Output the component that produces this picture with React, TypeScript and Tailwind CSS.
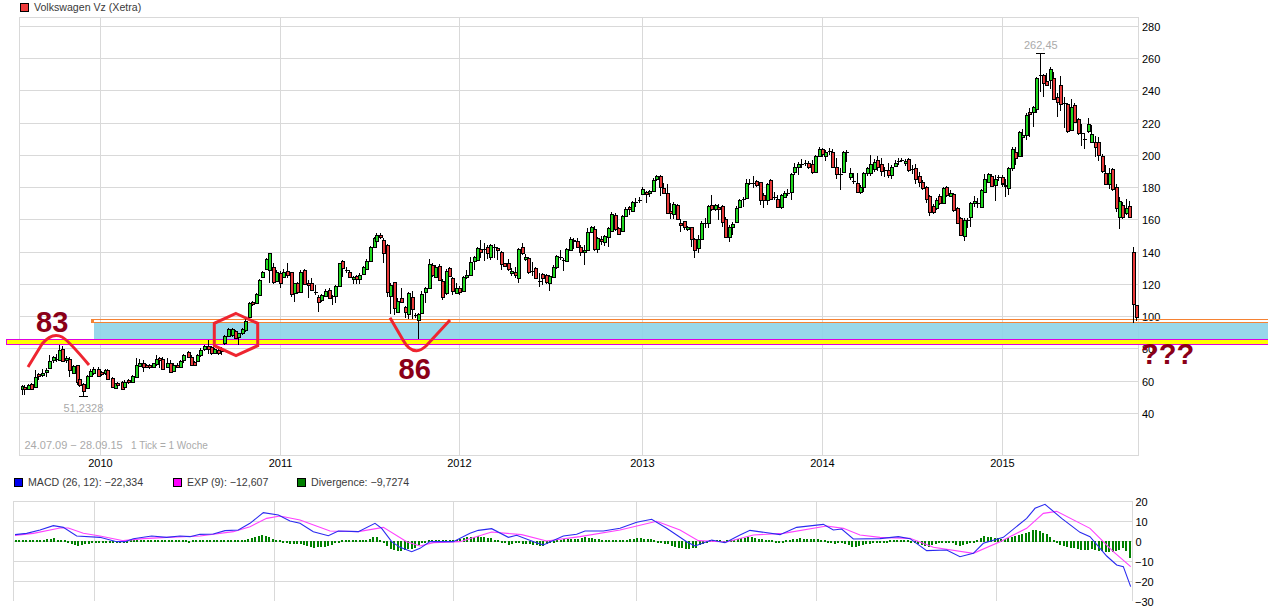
const FONT = "font-['Liberation_Sans',Arial,sans-serif]"

// candle data: xCg/r/d top,bottom[,high,low] in 3x crop coordinates of each stretch
const STRETCHES: { ox: number; oy: number; data: string }[] = [
  {
    ox: 0,
    oy: 280,
    data: `66g318,326,315,345 73r320,326,316,345 85g314,328,313,330 93r312,326,309,330 106g292,322,270,325 115r282,288,280,300 125g278,284,268,290
    137g270,276,265,292 146g244,265,225,265 158g232,240,229,250 168d236,236,222,246 178g210,240,195,242 187r207,242,197,242 197g235,240,228,250 207r237,270,232,290 220g258,278,255,280
    230r256,305,255,315 238r298,316,285,320 250r312,332,310,349 260g288,325,286,328 271g273,287,268,290 280g267,280,262,284 293r268,287,262,290 302r276,283,272,288
    315g270,280,266,284 322r270,297,266,300 335r295,320,292,322 344g310,323,308,328 352r308,315,305,318 365r306,326,303,328 373g305,322,300,326 385r300,307,296,312 395g288,305,284,308
    407g256,290,235,292 418g248,258,238,262 428r248,262,240,275 438r255,260,252,264 448r256,262,252,268 458g250,262,248,265 467g238,252,225,258 478r233,240,230,265 487r238,268,232,270
    500g250,262,235,265 510r248,275,240,278 520g254,272,250,276 530r255,260,250,264 541g243,260,240,262 550g226,240,222,250 563r217,230,214,234 572r230,255,225,258 581r245,255,242,258
    592g226,242,222,245 601g210,226,205,230 613g198,208,195,212 623r198,208,180,222 634r200,220,198,225 643g208,218,204,222 655r210,220,205,226 662r206,212,200,224 672g168,190,165,195
    685g147,167,143,170 695g147,165,143,170 706r153,175,150,178 715g160,172,158,195 727g147,160,145,165 736g122,150,115,155 748g70,112,65,115 757r65,72,62,78 768g42,70,40,72 778g0,45,-4,48`,
  },
  {
    ox: 200,
    oy: 220,
    data: `187g155,170,152,175 198g118,148,115,150 208g100,150,98,190 220r142,185,130,192 229g155,182,150,186 241r158,188,152,205 250g155,170,148,175 262r153,165,130,175 272r157,222,155,232
    283g190,220,188,245 292r190,215,185,222 301g155,215,150,218 313r150,193,148,196 323r190,195,180,235 334r190,210,175,213 344d217,217,195,225 355r230,247,225,275 364g226,240,222,245
    376g213,227,208,232 386r210,233,205,236 397d229,229,225,255 406g198,227,195,250 416g130,198,128,200 427r123,143,120,170 437d150,150,142,158 448r155,170,150,172 458g172,178,168,192
    468r168,178,165,192 478g165,178,160,192 490g142,163,138,166 499g122,148,118,150 511g82,122,78,125 521g55,80,52,85 529g45,62,40,72 540r45,52,38,58 550r60,100,55,130 562r75,215,73,230
    571g195,228,190,282 583r187,265,185,285 592g243,277,235,280 604r235,245,205,250 614r260,275,258,295 625g218,283,215,296 635r230,267,212,298 645d285,285,280,295 655g283,300,278,357
    664g222,278,212,282 676g205,215,202,250 686g133,205,118,208 696r135,165,130,170 706g140,172,136,175 717r137,180,133,183 727r182,232,178,240 738g152,220,148,225 748r145,168,140,172
    757r175,213,172,226 769g203,218,188,222 778r203,215,198,225 790g172,213,168,216 799g165,172,150,178 811g125,165,110,168`,
  },
  {
    ox: 470,
    oy: 170,
    data: `12g262,272,258,300 21g235,270,232,273 31r238,245,210,265 42d236,236,218,272 52r230,250,225,268 61g226,260,222,270 72d230,230,222,265 82r235,240,230,270 94r245,283,242,300 103r280,287,278,292
    115r280,298,268,302 124g302,310,295,318 136r305,316,290,325 145g237,325,234,340 156r232,248,220,255 166g260,268,252,272 175r265,305,260,312 187d302,302,275,318 196r295,325,292,328
    208d332,332,310,352 217r313,325,308,344 229r315,337,312,342 238g318,340,315,362 250g290,322,285,325 259g258,290,255,298 271d262,262,240,270 280d270,270,265,302 289g238,272,235,275
    301g207,240,200,242 310r210,213,205,238 322r213,232,205,235 331r232,245,225,258 343g240,247,225,284 352g187,240,175,243 364g172,187,168,190 373r178,238,168,242 382g205,238,202,248
    394r208,214,198,225 403g198,215,195,227 415g175,200,170,230 424g132,182,125,185 436r135,178,128,182 445r175,192,170,195 457g139,184,135,186 466g118,139,112,142 478r112,118,108,136
    487g97,122,92,126 496d97,97,85,110 508d90,90,82,100 517g58,73,52,76`,
  },
  {
    ox: 640,
    oy: 140,
    data: `19r155,163,152,190 28g154,160,150,172 40g120,152,115,155 49g109,118,104,122 61r108,140,105,168 70r145,158,130,160 82r160,220,132,222 91r212,220,190,236 100g192,223,185,236
    112r195,238,192,240 121r250,256,238,275 133r244,262,242,270 142g262,268,258,272 154r262,298,260,320 163r298,331,295,353 175g298,325,285,338 184g250,298,243,300 196d250,250,235,265
    205g198,250,195,265 214r196,208,165,212 226g196,206,192,212 235r202,207,192,240 247r199,245,195,262 256r238,290,232,292 268g262,290,255,305 277g253,260,245,285 289g204,245,198,250
    298g181,200,178,205 310d178,178,172,200 319g130,175,118,178 328d128,128,118,135 340d128,128,108,145 349r124,135,120,142 361r127,181,125,195 370r165,181,158,204 382g133,180,128,196
    391r120,176,117,180 403d170,170,157,180 412r178,200,165,205 424g166,202,162,208 433g160,170,152,175 442d158,158,148,168 454g103,157,100,180 463g82,95,68,105 475g73,82,65,105
    484d72,72,58,85 496d68,68,60,78 505r68,80,62,88 517r72,95,60,103 526g48,97,45,100`,
  },
  {
    ox: 820,
    oy: 135,
    data: `-2g43,62,37,65 5r43,58,38,65 15g52,62,45,78 27d47,47,40,60 37r52,95,42,98 49r97,118,70,132 59d118,118,100,165 70g52,112,48,115 79d52,52,45,80
    91g115,125,100,135 100d137,137,115,148 112r145,170,115,175 121g157,170,150,178 130g115,157,112,170 142g100,113,95,122 151g88,114,60,122 163g82,101,72,110 172r76,95,64,108
    184r88,108,70,122 193d105,105,95,125 205r106,119,85,128 214g95,119,90,132 226g85,92,75,95 235d77,77,68,90 244d76,76,70,82 256g77,85,72,92 265r73,104,70,110 277d101,101,90,118
    286r100,133,88,148 298r124,142,110,155 307r142,158,135,165 319r156,191,152,204 328r184,230,180,243 340r213,230,208,238 349g196,218,190,226 358r184,204,178,210 370g160,203,155,206
    379r157,180,152,185 391g175,182,165,186 400r178,224,174,230 412r219,265,216,268 421r250,300,245,303 433g254,304,250,318 442d254,254,248,278 451g204,245,200,276 463g199,205,183,215
    472d204,204,190,218 484g166,215,162,218 493g133,170,116,172 505g118,140,113,145 514r122,152,116,155 526g133,150,120,198 535d125,125,120,138 547r127,147,120,150 556d152,152,135,185 565g100,157,98,180`,
  },
  {
    ox: 1000,
    oy: 0,
    data: `7r532,550,525,560 16r555,558,538,590 25g505,563,500,566 37g448,505,442,512 46r457,475,440,496 58g397,468,392,472 67g405,412,388,472 79g345,405,340,420 88r335,343,325,410
    100g322,335,318,382 109g235,328,232,338 121d224,224,160,275 130r226,250,222,290 139r244,254,218,258 151g208,240,202,268 160r235,298,215,300 172r292,306,280,350 181r255,313,228,332
    193d310,310,292,385 202r313,392,310,400 214g322,390,298,392 223r316,366,308,370 235r358,400,354,404 244d400,400,372,438 253d418,418,400,448 265g373,392,355,398 274g403,425,375,428
    286r425,440,408,472 295r425,466,410,484 307r469,514,462,520 316r520,551,495,556 328g518,552,505,566 337r508,568,504,572 349r562,625,552,635 358g604,652,590,688 367r614,650,605,656
    379g623,640,598,645 388r619,650,604,652`,
  },
  {
    ox: 1000,
    oy: 230,
    data: `400r67,223,50,280 409r226,262,226,272`,
  },
]

type Candle = { x: number; top: number; bottom: number; high: number; low: number; kind: string }

const candles: Candle[] = STRETCHES.flatMap(({ ox, oy, data }) =>
  data
    .trim()
    .split(/\s+/)
    .map((tok) => {
      const m = tok.match(/^(-?\d+)([grd])(-?\d+),(-?\d+),(-?\d+),(-?\d+)$/)!
      const y = (n: string) => Math.round(oy + Number(n) / 3)
      return {
        x: Math.round(ox + Number(m[1]) / 3),
        kind: m[2],
        top: y(m[3]),
        bottom: y(m[4]),
        high: y(m[5]),
        low: y(m[6]),
      }
    }),
)

// macd lines, also in crop coordinates
const toPts = (ox: number, flat: number[]) => {
  const out: [number, number][] = []
  for (let i = 0; i < flat.length; i += 2) out.push([ox + flat[i] / 3, 460 + flat[i + 1] / 3])
  return out
}

const macd = [
  ...toPts(0, [45, 224, 80, 220, 120, 210, 160, 197, 190, 202, 230, 228, 300, 232, 350, 245, 375, 245, 400, 236, 455, 228, 500, 232, 540, 228, 570, 230, 600, 223, 640, 222, 675, 212, 715, 210, 750, 190, 790, 158, 835, 165, 870, 183, 900, 190, 940, 215, 985, 227, 1015, 213, 1075, 215, 1125, 190, 1145, 205, 1175, 245, 1200, 262, 1235, 275]),
  ...toPts(420, [0, 265, 30, 245, 100, 245, 150, 220, 175, 211, 215, 206, 265, 232, 290, 226, 345, 247, 370, 255, 430, 228, 470, 223, 495, 213, 550, 213, 600, 205, 650, 187, 695, 178, 740, 205, 800, 245, 825, 258, 875, 240, 915, 248, 960, 225, 990, 211, 1080, 224, 1130, 202, 1210, 193, 1240, 210, 1265, 207, 1300, 237]),
  ...toPts(880, [0, 236, 55, 230, 90, 236, 140, 272, 200, 270, 240, 290, 280, 280, 310, 250, 370, 232, 440, 175, 465, 145, 495, 133, 545, 175, 600, 217, 630, 230, 680, 288, 710, 315, 730, 320, 752, 380]),
]

const signal = [
  ...toPts(0, [45, 226, 100, 220, 180, 204, 205, 204, 250, 220, 300, 228, 370, 242, 430, 236, 500, 232, 600, 228, 700, 215, 750, 200, 800, 175, 840, 168, 900, 180, 990, 213, 1075, 215, 1150, 202, 1220, 245]),
  ...toPts(420, [0, 258, 40, 248, 120, 245, 215, 216, 305, 224, 380, 243, 480, 230, 600, 210, 710, 184, 780, 210, 835, 242, 920, 246, 1000, 225, 1090, 220, 1220, 198, 1270, 205, 1320, 225]),
  ...toPts(880, [0, 232, 90, 235, 160, 262, 280, 280, 360, 245, 440, 205, 490, 160, 530, 154, 630, 205, 700, 275, 752, 320]),
]

const at = (pts: [number, number][], x: number) => {
  for (let i = 1; i < pts.length; i++) {
    if (x <= pts[i][0]) {
      const [x0, y0] = pts[i - 1]
      const [x1, y1] = pts[i]
      return y0 + ((y1 - y0) * (x - x0)) / (x1 - x0)
    }
  }
  return pts[pts.length - 1][1]
}

const bars: { x: number; y: number; h: number }[] = []
for (let x = 15; x <= 1131; x += 3.47) {
  const d = at(signal, x) - at(macd, x)
  const h = Math.max(2, Math.abs(d))
  bars.push({ x: Math.round(x), y: d > 0 ? 541 - h + 1 : 541, h })
}

const line = (pts: [number, number][]) => pts.map((p) => p.join(',')).join(' ')

const PRICE_LINES: [string, number][] = [
  ['280', 26.5], ['260', 58.5], ['240', 90.5], ['220', 123.5], ['200', 155.5], ['180', 187.5], ['160', 219.5],
  ['140', 252.5], ['120', 284.5], ['100', 316.5], ['80', 348.5], ['60', 381.5], ['40', 413.5],
]
const YEARS: [string, number][] = [['2010', 100.5], ['2011', 280.5], ['2012', 459.5], ['2013', 642.5], ['2014', 822.5], ['2015', 1002.5]]
const MACD_YEARS = [94.5, 274.5, 453.5, 636.5, 816.5, 996.5]
const MACD_LINES: [string, number][] = [['20', 501.5], ['10', 521.5], ['0', 541.5], ['−10', 561.5], ['−20', 581.5], ['−30', 601.5]]

function CandleMark({ c }: { c: Candle }) {
  return (
    <g shapeRendering="crispEdges">
      <line x1={c.x + 0.5} x2={c.x + 0.5} y1={c.high} y2={c.low} stroke="#000" />
      {c.kind === 'd' ? (
        <line x1={c.x - 1} x2={c.x + 3} y1={c.top + 0.5} y2={c.top + 0.5} stroke="#000" />
      ) : (
        <rect
          x={c.x - 0.5}
          y={c.top + 0.5}
          width={3}
          height={Math.max(1, c.bottom - c.top)}
          fill={c.kind === 'g' ? '#1fd81f' : '#e83a3a'}
          stroke="#000"
        />
      )}
    </g>
  )
}

function PriceChart() {
  return (
    <svg width={1268} height={455} viewBox="0 15 1268 455" className="block text-[11px]">
      {/* grid */}
      <g stroke="#d9d9d9" shapeRendering="crispEdges">
        <rect x={19.5} y={17.5} width={1118.5} height={438} fill="#fff" />
        {PRICE_LINES.map(([, y]) => (
          <line key={y} x1={19} x2={1138} y1={y} y2={y} />
        ))}
        {YEARS.map(([, x]) => (
          <line key={x} x1={x} x2={x} y1={17} y2={455} />
        ))}
      </g>

      {PRICE_LINES.map(([label, y]) => (
        <text key={label} x={1142} y={y + 4.5} className="fill-black">{label}</text>
      ))}
      {YEARS.map(([label, x]) => (
        <text key={label} x={x} y={467} textAnchor="middle" className="fill-black">{label}</text>
      ))}

      {/* support zones */}
      <g shapeRendering="crispEdges">
        <rect x={94} y={322} width={1174} height={17} fill="#8fd4e8" fillOpacity={0.92} />
        <line x1={91} x2={1268} y1={319.5} y2={319.5} stroke="#f58233" />
        <line x1={91} x2={1268} y1={322.5} y2={322.5} stroke="#f58233" />
        <rect x={91} y={319} width={3} height={4} fill="#f58233" />
        <rect x={6.5} y={339.5} width={1270} height={5} fill="#ffff00" stroke="#e000e0" />
      </g>

      {candles.map((c, i) => (
        <CandleMark key={i} c={c} />
      ))}

      {/* high / low markers */}
      <g stroke="#000" shapeRendering="crispEdges">
        <line x1={1036} x2={1045} y1={53.5} y2={53.5} />
        <line x1={79} x2={88} y1={396.5} y2={396.5} />
      </g>
      <text x={1024} y={49} className="fill-[#aaa]">262,45</text>
      <text x={63.5} y={412} className="fill-[#aaa]">51,2328</text>
      <text x={24.5} y={449} className="fill-[#aaa]">24.07.09 − 28.09.15</text>
      <text x={131} y={449} className="fill-[#aaa] text-[10px]">1 Tick = 1 Woche</text>

      {/* hand drawn notes */}
      <g fill="none" stroke="#ee2530" strokeWidth={3}>
        <path d="M28 367 L42 344 Q52 332 62 337 Q68 340 89 365" />
        <path d="M236 313.5 L257.7 323.3 V345.7 L236 355.7 L214.3 345.7 V323.3 Z" />
        <path d="M390 317.7 L403 340 Q409 351 416.7 350.7 Q421 350.5 426 346 L450 320" />
      </g>
      <g className="text-[29px] font-bold fill-[#8b0018]">
        <text x={36} y={332}>83</text>
        <text x={398.5} y={379}>86</text>
        <text x={1141} y={364}>???</text>
      </g>
    </svg>
  )
}

function MacdChart() {
  return (
    <svg width={1268} height={119} viewBox="0 495 1268 119" className="block text-[11px]">
      <g stroke="#d9d9d9" shapeRendering="crispEdges">
        {MACD_LINES.slice(0, 5).map(([, y]) => (
          <line key={y} x1={13} x2={1132} y1={y} y2={y} />
        ))}
        <line x1={13.5} x2={13.5} y1={501} y2={601} />
        <line x1={1132.5} x2={1132.5} y1={501} y2={601} />
        {MACD_YEARS.map((x) => (
          <line key={x} x1={x} x2={x} y1={501} y2={601} />
        ))}
      </g>
      <g fill="#008000" shapeRendering="crispEdges">
        {bars.map((b, i) => (
          <rect key={i} x={b.x} y={b.y} width={2} height={b.h} />
        ))}
      </g>
      <polyline points={line(signal)} fill="none" stroke="#ff40ff" strokeWidth={1.1} />
      <polyline points={line(macd)} fill="none" stroke="#2a2af0" strokeWidth={1.1} />
      {MACD_LINES.map(([label, y]) => (
        <text key={label} x={label.length > 2 ? 1135 : 1135.5} y={y + 4} className="fill-black">{label}</text>
      ))}
    </svg>
  )
}

function LegendItem({ color, label, width }: { color: string; label: string; width: string }) {
  return (
    <div className={`flex items-center gap-[5px] ${width}`}>
      <span className={`w-[9px] h-[9px] border border-black ${color}`} />
      <span className="text-[10.6px] leading-none text-[#3a3a3a] whitespace-nowrap">{label}</span>
    </div>
  )
}

export default function App() {
  return (
    <div className={`w-[1268px] h-[614px] overflow-hidden bg-white ${FONT}`}>
      <div className="flex items-center h-[15px] pl-[20px]">
        <LegendItem color="bg-[#ee3b3b]" label="Volkswagen Vz (Xetra)" width="w-[200px]" />
      </div>
      <PriceChart />
      <div className="flex items-center h-[25px] pl-[14px]">
        <LegendItem color="bg-[#0000ee]" label="MACD (26, 12): −22,334" width="w-[159px]" />
        <LegendItem color="bg-[#ff00ff]" label="EXP (9): −12,607" width="w-[124px]" />
        <LegendItem color="bg-[#008000]" label="Divergence: −9,7274" width="w-[140px]" />
      </div>
      <MacdChart />
    </div>
  )
}
